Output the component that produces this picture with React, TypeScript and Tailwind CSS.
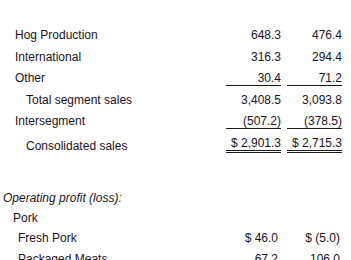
import React from "react";

type Row = {
  label: string;
  indent: string;
  a?: string;
  b?: string;
  line?: "single" | "double";
  italic?: boolean;
  labelShift?: boolean;
  numPad?: boolean;
};

const top: Row[] = [
  { label: "Hog Production", indent: "pl-[15px]", a: "648.3", b: "476.4" },
  { label: "International", indent: "pl-[15px]", a: "316.3", b: "294.4" },
  { label: "Other", indent: "pl-[15px]", a: "30.4", b: "71.2", line: "single" },
  { label: "Total segment sales", indent: "pl-[26px]", a: "3,408.5", b: "3,093.8" },
  { label: "Intersegment", indent: "pl-[15px]", a: "(507.2)", b: "(378.5)", line: "single" },
  {
    label: "Consolidated sales",
    indent: "pl-[26px]",
    a: "$ 2,901.3",
    b: "$ 2,715.3",
    line: "double",
    labelShift: true,
  },
];

const bottom: Row[] = [
  { label: "Operating profit (loss):", indent: "pl-[3px]", italic: true },
  { label: "Pork", indent: "pl-[13px]" },
  { label: "Fresh Pork", indent: "pl-[18px]", a: "$ 46.0", b: "$ (5.0)", numPad: true },
  { label: "Packaged Meats", indent: "pl-[18px]", a: "67.2", b: "106.0", numPad: true },
];

function Num({ v, line, pad }: { v?: string; line?: Row["line"]; pad: string }) {
  const border =
    line === "single"
      ? "border-b border-[#1a1a1a]"
      : line === "double"
      ? "border-b-[3px] border-double border-[#1a1a1a]"
      : "";
  return (
    <span className={`inline-block w-[55px] text-right leading-[13px] whitespace-pre ${pad} ${border}`}>
      {v ?? ""}
    </span>
  );
}

function Line({ r, h }: { r: Row; h: string }) {
  return (
    <div className={`flex items-start pt-[4px] ${h}`}>
      <div
        className={`w-[226px] shrink-0 leading-[13px] whitespace-nowrap ${r.indent} ${
          r.italic ? "italic" : ""
        } ${r.labelShift ? "mt-[3px]" : ""}`}
      >
        {r.label}
      </div>
      {r.a !== undefined || r.b !== undefined ? (
        <>
          <Num v={r.a} line={r.line} pad={r.numPad ? "pr-[3px]" : "pr-0"} />
          <div className="w-[6px] shrink-0" />
          <Num v={r.b} line={r.line} pad={r.numPad ? "pr-[2px]" : "pr-0"} />
        </>
      ) : null}
    </div>
  );
}

export default function App() {
  return (
    <div className="w-[351px] h-[260px] overflow-hidden bg-white text-[12px] text-[#1c121c] font-['Liberation_Sans',Arial,sans-serif]">
      <div className="pt-[25px]">
        {top.map((r) => (
          <Line key={r.label} r={r} h="h-[21.6px]" />
        ))}
      </div>
      <div className="mt-[33px]">
        {bottom.map((r) => (
          <Line key={r.label} r={r} h="h-[20.4px]" />
        ))}
      </div>
    </div>
  );
}
